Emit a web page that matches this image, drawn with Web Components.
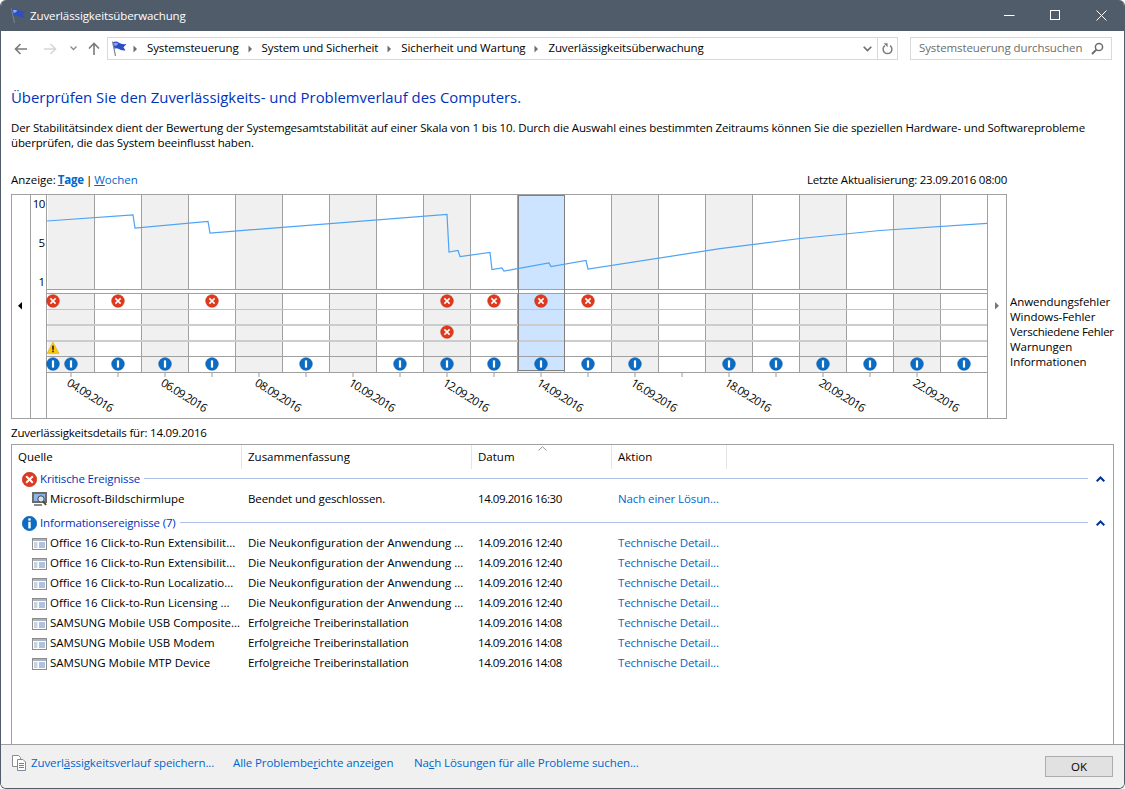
<!DOCTYPE html>
<html lang="de">
<head>
<meta charset="utf-8">
<title>Zuverlässigkeitsüberwachung</title>
<style>
  html, body { margin: 0; background: #fff; }
  body { width: 1125px; height: 789px; overflow: hidden; font: 11.5px/15px "Open Sans", "Liberation Sans", sans-serif; color: #000; }
  u { text-underline-offset: 1px; }
  .leg { height: 15px; white-space: nowrap; letter-spacing: -.05px; }
  .tight { --sum-ls: -.13px; }
</style>
</head>
<body>
<app-window>
  <title-bar slot="top">Zuverlässigkeitsüberwachung</title-bar>
  <nav-bar slot="top"></nav-bar>

  <page-intro heading="Überprüfen Sie den Zuverlässigkeits- und Problemverlauf des Computers.">
    Der Stabilitätsindex dient der Bewertung der Systemgesamtstabilität auf einer Skala von 1 bis 10. Durch die Auswahl eines bestimmten Zeitraums können Sie die speziellen Hardware- und Softwareprobleme überprüfen, die das System beeinflusst haben.
  </page-intro>

  <view-switch updated="Letzte Aktualisierung: 23.09.2016 08:00"></view-switch>

  <reliability-chart>
    <div class="leg">Anwendungsfehler</div>
    <div class="leg">Windows-Fehler</div>
    <div class="leg" style="letter-spacing:-.27px">Verschiedene Fehler</div>
    <div class="leg">Warnungen</div>
    <div class="leg">Informationen</div>
  </reliability-chart>

  <details-label>Zuverlässigkeitsdetails für: 14.09.2016</details-label>

  <details-list>
    <list-group kind="error" label="Kritische Ereignisse">
      <list-row class="tight" icon="magnifier" source="Microsoft-Bildschirmlupe" summary="Beendet und geschlossen." date="14.09.2016 16:30" action="Nach einer Lösun..."></list-row>
    </list-group>
    <list-group kind="info" label="Informationsereignisse (7)" style="margin-top:4px">
      <list-row source="Office 16 Click-to-Run Extensibilit..." summary="Die Neukonfiguration der Anwendung ..." date="14.09.2016 12:40" action="Technische Detail..."></list-row>
      <list-row source="Office 16 Click-to-Run Extensibilit..." summary="Die Neukonfiguration der Anwendung ..." date="14.09.2016 12:40" action="Technische Detail..."></list-row>
      <list-row source="Office 16 Click-to-Run Localizatio..." summary="Die Neukonfiguration der Anwendung ..." date="14.09.2016 12:40" action="Technische Detail..."></list-row>
      <list-row source="Office 16 Click-to-Run Licensing ..." summary="Die Neukonfiguration der Anwendung ..." date="14.09.2016 12:40" action="Technische Detail..."></list-row>
      <list-row class="tight" source="SAMSUNG Mobile USB Composite..." summary="Erfolgreiche Treiberinstallation" date="14.09.2016 14:08" action="Technische Detail..."></list-row>
      <list-row class="tight" source="SAMSUNG Mobile USB Modem" summary="Erfolgreiche Treiberinstallation" date="14.09.2016 14:08" action="Technische Detail..."></list-row>
      <list-row class="tight" source="SAMSUNG Mobile MTP Device" summary="Erfolgreiche Treiberinstallation" date="14.09.2016 14:08" action="Technische Detail..."></list-row>
    </list-group>
  </details-list>

  <footer-bar slot="bottom">
    <span slot="a">Zuverl<u>ä</u>ssigkeitsverlauf speichern...</span>
    <span slot="b">Alle Problembe<u>r</u>ichte anzeigen</span>
    <span slot="c">Na<u>c</u>h Lösungen für alle Probleme suchen...</span>
  </footer-bar>
</app-window>

<script>
const FLAG = `<svg width="16" height="16" viewBox="0 0 16 16">
  <path d="M1.5 0.5L4.5 15" stroke="#77808c" stroke-width="1.2" fill="none"/>
  <path d="M2 1.2Q5.5 -0.2 8 1.8Q10.5 3.6 15.5 3L12.5 6.2L14.5 9.4Q10 9.8 7.8 8Q5.6 6.6 3.6 7.8Z" fill="#2c4fc4"/>
  <path d="M3 2Q5.5 1.2 7.4 2.8L5 4.8L3.6 5Z" fill="#8fa6ee"/>
</svg>`;

function shadow(el, html) {
  el.attachShadow({ mode: 'open' }).innerHTML = html;
}

class AppWindow extends HTMLElement {
  constructor() {
    super();
    shadow(this, `<style>
      :host { display: flex; flex-direction: column; box-sizing: border-box; width: 1125px; height: 789px;
        border: 1px solid #525d6b; border-top: 0; border-radius: 6px 6px 6px 6px; overflow: hidden; background: #fff; }
      main { flex: 1; min-height: 0; display: flex; flex-direction: column; padding: 0 10px; }
    </style>
    <slot name="top"></slot>
    <main><slot></slot></main>
    <slot name="bottom"></slot>`);
  }
}

class TitleBar extends HTMLElement {
  constructor() {
    super();
    shadow(this, `<style>
      :host { display: flex; align-items: center; height: 31px; background: #515c6b; color: #fff; padding-left: 9px; }
      .t { margin-left: 4px; flex: 1; letter-spacing: -.1px; }
      svg { display: block; }
      .b { display: flex; }
      .b div { width: 46px; display: flex; justify-content: center; }
    </style>
    ${FLAG}<span class="t"><slot></slot></span>
    <div class="b">
      <div><svg width="11" height="11"><path d="M0 5.5H10.5" stroke="#fff"/></svg></div>
      <div><svg width="11" height="11"><rect x=".5" y=".5" width="9" height="9" fill="none" stroke="#fff"/></svg></div>
      <div><svg width="11" height="11"><path d="M.5 .5L10.5 10.5M10.5 .5L.5 10.5" stroke="#fff" fill="none"/></svg></div>
    </div>`);
  }
}

class NavBar extends HTMLElement {
  constructor() {
    super();
    const crumbs = ['Systemsteuerung', 'System und Sicherheit', 'Sicherheit und Wartung', 'Zuverlässigkeitsüberwachung'];
    const sep = `<svg class="sep" width="5" height="8"><path d="M.5 .5L4 4L.5 7.5" fill="#6d6d6d"/></svg>`;
    shadow(this, `<style>
      :host { display: flex; align-items: flex-start; height: 34px; padding: 6px 0 0 13px; box-sizing: border-box; }
      svg { display: block; flex: none; }
      .btns { display: flex; align-items: center; height: 23px; width: 93px; flex: none; }
      .addr, .search { display: flex; align-items: center; box-sizing: border-box; height: 23px; border: 1px solid #d9d9d9; }
      .addr { width: 791px; padding-left: 3px; flex: none; }
      .addr .crumbs { flex: 1; display: flex; align-items: center; white-space: nowrap; letter-spacing: -.12px; }
      .sep { margin: 0 9px 0 6px; }
      .crumbs span { margin-right: 3px; padding-bottom: 2px; }
      .drop { width: 20px; display: flex; justify-content: center; }
      .ref { border-left: 1px solid #d9d9d9; height: 21px; width: 19px; display: flex; align-items: center; justify-content: center; }
      .search { width: 202px; margin-left: 12px; color: #6d6d6d; padding-left: 8px; }
      .search span { flex: 1; white-space: nowrap; letter-spacing: -.11px; padding-bottom: 2px; }
      .search svg { margin-right: 7px; }
    </style>
    <div class="btns">
      <svg width="13" height="12" style="margin:0 17px 0 0"><path d="M13 6H1.5M6.5 1L1.5 6L6.5 11" fill="none" stroke="#7a7a7a" stroke-width="1.6"/></svg>
      <svg width="13" height="12" style="margin-right:13px"><path d="M0 6H11.5M6.5 1L11.5 6L6.5 11" fill="none" stroke="#d6d6d6" stroke-width="1.6"/></svg>
      <svg width="7" height="5" style="margin-right:11px"><path d="M.5 .5L3.5 3.5L6.5 .5" fill="none" stroke="#8a8a8a" stroke-width="1.3"/></svg>
      <svg width="12" height="13"><path d="M6 13V1.5M1 6.5L6 1.5L11 6.5" fill="none" stroke="#7a7a7a" stroke-width="1.6"/></svg>
    </div>
    <div class="addr">
      <div style="width:16px">${FLAG}</div>
      <div class="crumbs">${crumbs.map(c => sep + `<span>${c}</span>`).join('')}</div>
      <div class="drop"><svg width="9" height="6"><path d="M.7 .7L4.5 4.5L8.3 .7" fill="none" stroke="#6d6d6d" stroke-width="1.6"/></svg></div>
      <div class="ref"><svg width="11" height="12" viewBox="0 0 11 12"><path d="M3 2.6A4.4 4.4 0 1 0 8 2.6" fill="none" stroke="#7d7d7d" stroke-width="1.5"/><path d="M1.6 .3L5.6 .3L5.6 4.3Z" fill="#7d7d7d"/></svg></div>
    </div>
    <div class="search"><span>Systemsteuerung durchsuchen</span>
      <svg width="13" height="13" viewBox="0 0 13 13"><circle cx="8" cy="5" r="3.6" fill="none" stroke="#6d6d6d" stroke-width="1.5"/><path d="M5.4 7.6L1 12" stroke="#6d6d6d" stroke-width="2"/></svg>
    </div>`);
  }
}

class PageIntro extends HTMLElement {
  constructor() {
    super();
    shadow(this, `<style>
      :host { display: block; }
      h1 { margin: 22px 0 13px; font-weight: 400; font-size: 14.9px; line-height: 20px; color: #0033bc; white-space: nowrap; }
      p { margin: 0; height: 30px; max-width: 1090px; letter-spacing: -.14px; }
    </style><h1></h1><p><slot></slot></p>`);
    this.shadowRoot.querySelector('h1').textContent = this.getAttribute('heading');
  }
}

class ViewSwitch extends HTMLElement {
  constructor() {
    super();
    shadow(this, `<style>
      :host { display: flex; justify-content: space-between; width: 996px; height: 15px; margin: 22px 0 7px; white-space: nowrap; }
      a { color: #0066cc; text-decoration: none; }
      u { text-underline-offset: 1px; }
      .v { word-spacing: -1px; }
      .up { letter-spacing: -.23px; }
    </style>
    <div class="v">Anzeige: <a style="font-weight:700;letter-spacing:-.2px"><u>T</u>age</a> | <a><u>W</u>ochen</a></div>
    <div class="up">${this.getAttribute('updated')}</div>`);
  }
}

// punkte der stabilitaetslinie, in fensterkoordinaten
const LINE = '47,221 133,215 135,228 208,221.5 210,233 447,214.5 449,252 458,250.5 460,256.5 490,252.5 492,269.5 502,268 504,271 549,263 551,266.5 586,260.5 588,269 720,248.7 800,238.5 880,230.5 987,223.4';
const EVENTS = {
  err: [[53, 301], [118, 301], [212, 301], [447, 301], [494, 301], [541, 301], [588, 301], [447, 332]],
  warn: [[53, 348]],
  info: [53, 71, 118, 165, 212, 306, 400, 447, 494, 541, 588, 635, 729, 776, 823, 870, 917, 964].map(x => [x, 364])
};
const DATES = ['04', '06', '08', '10', '12', '14', '16', '18', '20', '22'];

class ReliabilityChart extends HTMLElement {
  constructor() {
    super();
    let g = '';
    for (let k = 0; k < 10; k++) {
      const x = 48 + 94 * k;
      g += `<rect x="${x}" y="195" width="46" height="94" fill="#f0f0f0"/><rect x="${x}" y="294" width="46" height="78" fill="#f0f0f0"/>`;
    }
    g += `<rect x="519" y="195" width="45" height="94" fill="#cce4ff"/><rect x="519" y="294" width="45" height="76" fill="#cce4ff"/>`;
    for (let k = 1; k < 20; k++) {
      const x = 47 + 47 * k + .5;
      g += `<path d="M${x} 194V289M${x} 293V372" stroke="#a0a0a0"/>`;
    }
    g += `<path d="M47 289.5H987M47 293.5H987M47 356.5H987M47 372.5H987" stroke="#a0a0a0"/>`;
    g += `<path d="M47 309.5H987" stroke="#c4c4c4"/><path d="M47 325H987M47 341H987" stroke="#cccccc" stroke-width="2"/>`;
    for (let k = 0; k < 19; k++) {
      g += `<rect x="${70 + 47 * k}" y="373" width="2" height="4" fill="#cdcdcd"/>`;
    }
    g += `<rect x="518.5" y="195.5" width="46" height="175" fill="none" stroke="#fff"/>`;
    g += `<rect x="518.5" y="195.5" width="46" height="175" fill="none" stroke="#000" stroke-dasharray="1 1"/>`;
    g += `<polyline points="${LINE}" fill="none" stroke="#4da3f5" stroke-width="1.2"/>`;
    g += EVENTS.err.map(p => `<use href="#err" x="${p[0]}" y="${p[1]}"/>`).join('');
    g += EVENTS.warn.map(p => `<use href="#warn" x="${p[0]}" y="${p[1]}"/>`).join('');
    g += EVENTS.info.map(p => `<use href="#inf" x="${p[0]}" y="${p[1]}"/>`).join('');
    g += DATES.map((d, i) => {
      const x = 66 + 94 * i;
      return `<text class="d" x="${x}" y="385" transform="rotate(32 ${x} 385)">${d}.09.2016</text>`;
    }).join('');

    shadow(this, `<style>
      :host { display: flex; height: 225px; flex: none; }
      svg { display: block; flex: none; }
      text { font: inherit; fill: #000; }
      .d { letter-spacing: -.72px; }
      .leg { margin-left: 3px; padding-top: 100px; }
    </style>
    <svg width="996" height="225" viewBox="11 194 996 225">
      <defs>
        <g id="err"><circle r="6.3" fill="#e2391c" stroke="#c62c12" stroke-width=".6"/><path d="M-2.6 -2.6L2.6 2.6M2.6 -2.6L-2.6 2.6" stroke="#fff" stroke-width="1.5"/></g>
        <g id="inf"><circle r="6.3" fill="#0b6cc6" stroke="#0a5ba8" stroke-width=".6"/><rect x="-1.1" y="-3.6" width="2.2" height="7.2" fill="#fff"/></g>
        <g id="warn"><path d="M0 -6L6 5.4H-6Z" fill="#fdc80f" stroke="#d9a400" stroke-width=".5"/><rect x="-.8" y="-2.4" width="1.6" height="4.2" fill="#222"/><rect x="-.8" y="2.6" width="1.6" height="1.6" fill="#222"/></g>
      </defs>
      <rect x="11" y="194" width="996" height="225" fill="#fff"/>
      <rect x="11.5" y="194.5" width="995" height="224" fill="none" stroke="#a0a0a0"/>
      <path d="M30.5 194V418M46.5 194V418M987.5 194V418" stroke="#a0a0a0"/>
      ${g}
      <text x="45" y="207.5" text-anchor="end" letter-spacing="-.4">10</text>
      <text x="45" y="247" text-anchor="end">5</text>
      <text x="45" y="286" text-anchor="end">1</text>
      <path d="M22 302V309.5L18 305.7Z" fill="#000"/>
      <path d="M995 302V309.5L999 305.7Z" fill="#777"/>
    </svg>
    <div class="leg"><slot></slot></div>`);
  }
}

class DetailsLabel extends HTMLElement {
  constructor() {
    super();
    shadow(this, `<style>:host { display: block; height: 15px; margin: 6px 0 4px; white-space: nowrap; letter-spacing: -.2px; }</style><slot></slot>`);
  }
}

class DetailsList extends HTMLElement {
  constructor() {
    super();
    shadow(this, `<style>
      :host { display: block; flex: 1; min-height: 0; box-sizing: border-box; border: 1px solid #a0a0a0; border-bottom: 0; position: relative; }
      .head { display: flex; height: 24px; }
      .head div { box-sizing: border-box; padding: 4px 0 0 6px; border-right: 1px solid #e5e5e5; height: 24px; }
      .sort { position: absolute; left: 526px; top: 1px; display: block; }
    </style>
    <div class="head">
      <div style="width:230px">Quelle</div><div style="width:230px">Zusammenfassung</div>
      <div style="width:140px">Datum</div><div style="width:115px">Aktion</div>
    </div>
    <svg class="sort" width="9" height="5"><path d="M.5 4.5L4.5 .7L8.5 4.5" fill="none" stroke="#999"/></svg>
    <slot></slot>`);
  }
}

class StatusIcon extends HTMLElement {
  constructor() {
    super();
    const err = this.getAttribute('kind') === 'error';
    shadow(this, `<style>:host { display: block; width: 15px; height: 15px; flex: none; } svg { display: block; }</style>
    <svg width="15" height="15" viewBox="0 0 15 15">` + (err
      ? `<circle cx="7.5" cy="7.5" r="7.2" fill="#dd3a1e" stroke="#b92a10" stroke-width=".6"/><path d="M4.2 4.2L10.8 10.8M10.8 4.2L4.2 10.8" stroke="#fff" stroke-width="2"/>`
      : `<circle cx="7.5" cy="7.5" r="7.2" fill="#0b6cc6" stroke="#0a58a4" stroke-width=".6"/><rect x="6.3" y="2.4" width="2.4" height="2.2" fill="#fff"/><rect x="6.3" y="5.8" width="2.4" height="6.6" fill="#fff"/>`) + `</svg>`);
  }
}

class ListGroup extends HTMLElement {
  constructor() {
    super();
    shadow(this, `<style>
      :host { display: block; }
      .g { display: flex; align-items: center; height: 20px; padding: 0 8px 0 10px; color: #0033bc; white-space: nowrap; }
      .l { margin-left: 3px; letter-spacing: -.16px; padding-bottom: 2px; }
      .rule { flex: 1; height: 1px; background: #b2c1e8; margin: 0 8px 2px 4px; }
      svg { display: block; }
    </style>
    <div class="g">
      <status-icon kind="${this.getAttribute('kind')}"></status-icon>
      <span class="l">${this.getAttribute('label')}</span>
      <div class="rule"></div>
      <svg width="9" height="6" style="margin-bottom:1px"><path d="M.7 5.3L4.5 1.5L8.3 5.3" fill="none" stroke="#003399" stroke-width="2"/></svg>
    </div>
    <slot></slot>`);
  }
}

const ROW_ICONS = {
  window: `<rect x=".5" y="2.5" width="14" height="11" fill="#fff" stroke="#8c8c8c"/><rect x="1" y="3" width="13" height="2" fill="#a9b4c2"/>
    <rect x="2" y="6" width="3.5" height="6" fill="#c9d3df"/><path d="M7 7H13M7 9H13M7 11H13" stroke="#5d86c4"/>`,
  magnifier: `<rect x=".5" y=".5" width="14" height="10" fill="#4a6fb0" stroke="#6a6a6a"/><rect x="2" y="2" width="11" height="7" fill="#8fb4e8"/>
    <path d="M2 13H10" stroke="#8a8a8a" stroke-width="2"/><circle cx="9" cy="7" r="3.2" fill="#cfe2f8" stroke="#444"/><path d="M11.2 9.4L14 13" stroke="#5a4a20" stroke-width="2"/>`
};

class ListRow extends HTMLElement {
  constructor() {
    super();
    const a = n => this.getAttribute(n);
    shadow(this, `<style>
      :host { display: grid; grid-template-columns: 230px 230px 140px 1fr; height: 20px; align-items: center; white-space: nowrap; }
      div { padding: 0 0 1px 6px; }
      .src { display: flex; align-items: center; padding: 0 0 0 20px; gap: 3px; }
      .src span { padding-bottom: 1px; }
      svg { display: block; flex: none; }
      .sum { letter-spacing: var(--sum-ls, 0); }
      .dat { letter-spacing: -.45px; }
      .act { color: #0066cc; letter-spacing: -.1px; }
    </style>
    <div class="src"><svg width="15" height="15" viewBox="0 0 15 15">${ROW_ICONS[a('icon') || 'window']}</svg><span>${a('source')}</span></div>
    <div class="sum">${a('summary')}</div><div class="dat">${a('date')}</div><div class="act">${a('action')}</div>`);
  }
}

class FooterBar extends HTMLElement {
  constructor() {
    super();
    shadow(this, `<style>
      :host { display: flex; align-items: center; flex: none; height: 44px; box-sizing: border-box; border-top: 1px solid #a0a0a0; background: #f0f0f0;
        padding: 0 11px 0 11px; color: #0066cc; white-space: nowrap; }
      .links { display: flex; align-items: center; flex: 1; margin-bottom: 8px; letter-spacing: -.1px; }
      svg { display: block; margin-right: 5px; flex: none; }
      .a { width: 202px; } .b { width: 181px; }
      button { width: 68px; height: 21px; padding: 0; border: 1px solid #adadad; background: #e1e1e1; font: inherit; color: #000; }
    </style>
    <div class="links">
      <svg width="14" height="16" viewBox="0 0 14 16">
        <path d="M.5 .5H6.5L8.5 2.5V11.5H.5Z" fill="#fff" stroke="#8c8c8c"/>
        <path d="M5.5 4.5H11L13.5 7V15.5H5.5Z" fill="#fff" stroke="#7a8aa0"/>
        <path d="M7 8.5H12M7 10.5H12M7 12.5H12" stroke="#4d86d0"/>
      </svg>
      <div class="a"><slot name="a"></slot></div>
      <div class="b"><slot name="b"></slot></div>
      <div><slot name="c"></slot></div>
    </div>
    <button>OK</button>`);
  }
}

// kinder zuerst, damit die schatten beim einhaengen schon stehen
customElements.define('status-icon', StatusIcon);
customElements.define('app-window', AppWindow);
customElements.define('title-bar', TitleBar);
customElements.define('nav-bar', NavBar);
customElements.define('page-intro', PageIntro);
customElements.define('view-switch', ViewSwitch);
customElements.define('reliability-chart', ReliabilityChart);
customElements.define('details-label', DetailsLabel);
customElements.define('details-list', DetailsList);
customElements.define('list-group', ListGroup);
customElements.define('list-row', ListRow);
customElements.define('footer-bar', FooterBar);
</script>
</body>
</html>
